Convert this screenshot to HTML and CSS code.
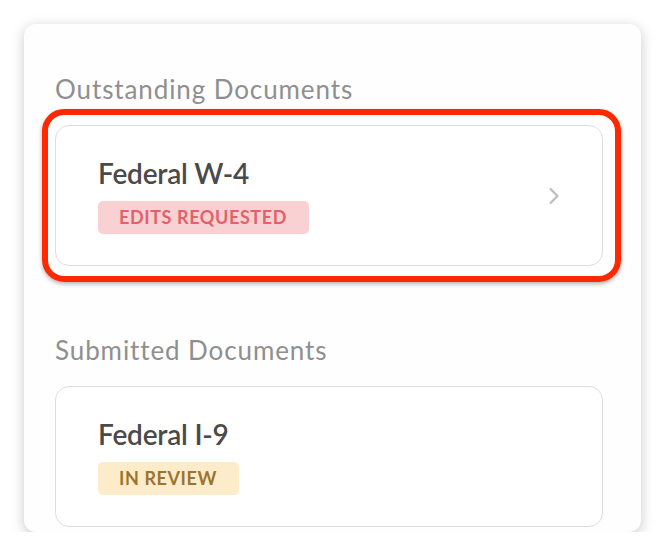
FILE: index.html
```html
<!DOCTYPE html>
<html lang="en">
<head>
<meta charset="utf-8">
<title>Documents</title>
<link rel="stylesheet" href="styles.css">
</head>
<body>
<main class="panel">
  <section class="group">
    <h2 class="group-title">Outstanding Documents</h2>
    <a class="doc-card is-highlighted" href="#">
      <div class="doc-info">
        <h3 class="doc-title">Federal W-4</h3>
        <span class="badge badge-edits">EDITS REQUESTED</span>
      </div>
      <svg class="chevron" width="12" height="18" viewBox="0 0 12 18" aria-hidden="true">
        <polyline points="2.5,2 9.5,9 2.5,16" fill="none" stroke="#bdbdbd" stroke-width="2.2" stroke-linecap="round" stroke-linejoin="round"/>
      </svg>
    </a>
  </section>
  <section class="group group-submitted">
    <h2 class="group-title">Submitted Documents</h2>
    <a class="doc-card" href="#">
      <div class="doc-info">
        <h3 class="doc-title">Federal I-9</h3>
        <span class="badge badge-review">IN REVIEW</span>
      </div>
    </a>
  </section>
</main>
</body>
</html>
```
FILE: styles.css
```css
html, body {
  margin: 0;
  padding: 0;
  background: #ffffff;
}

body {
  padding: 24px 24px 0 24px;
  font-family: Lato, "Open Sans", "Liberation Sans", sans-serif;
}

.panel {
  width: 617px;
  height: 508px;
  box-sizing: border-box;
  padding: 50px 38px 0 31px;
  background: #fefefe;
  border-radius: 12px;
  box-shadow: 0 3px 13px rgba(0, 0, 0, 0.22);
  overflow: hidden;
}

.group-title {
  margin: 0 0 21px 0;
  font-size: 26px;
  line-height: 30px;
  font-weight: 400;
  color: #8f8f8f;
  letter-spacing: 0.9px;
}

.group-submitted {
  margin-top: 69px;
}

.doc-card {
  position: relative;
  display: flex;
  align-items: center;
  justify-content: space-between;
  height: 141px;
  box-sizing: border-box;
  padding: 0 42px 0 42px;
  border: 1.5px solid #dddddd;
  border-radius: 14px;
  background: #ffffff;
  text-decoration: none;
}

.is-highlighted::after {
  content: "";
  position: absolute;
  top: -17px;
  bottom: -17px;
  left: -14px;
  right: -19px;
  border: 6px solid #ff2800;
  border-radius: 22px;
  box-shadow: 0 2px 4px rgba(0, 0, 0, 0.3);
  pointer-events: none;
}

.doc-info {
  display: flex;
  flex-direction: column;
  align-items: flex-start;
  gap: 12px;
}

.doc-title {
  margin: 0;
  font-size: 28px;
  line-height: 32px;
  font-weight: 600;
  color: #4a4a4a;
  letter-spacing: -0.2px;
}

.badge {
  display: inline-block;
  height: 33px;
  line-height: 33px;
  padding: 0 22px 0 21px;
  border-radius: 5px;
  font-size: 18px;
  font-weight: 700;
  letter-spacing: 0.6px;
}

.badge-edits {
  background: #f9d1d3;
  color: #e0626a;
}

.badge-review {
  background: #fdecc9;
  color: #9b7430;
}

.chevron {
  display: block;
  flex: none;
}
```
